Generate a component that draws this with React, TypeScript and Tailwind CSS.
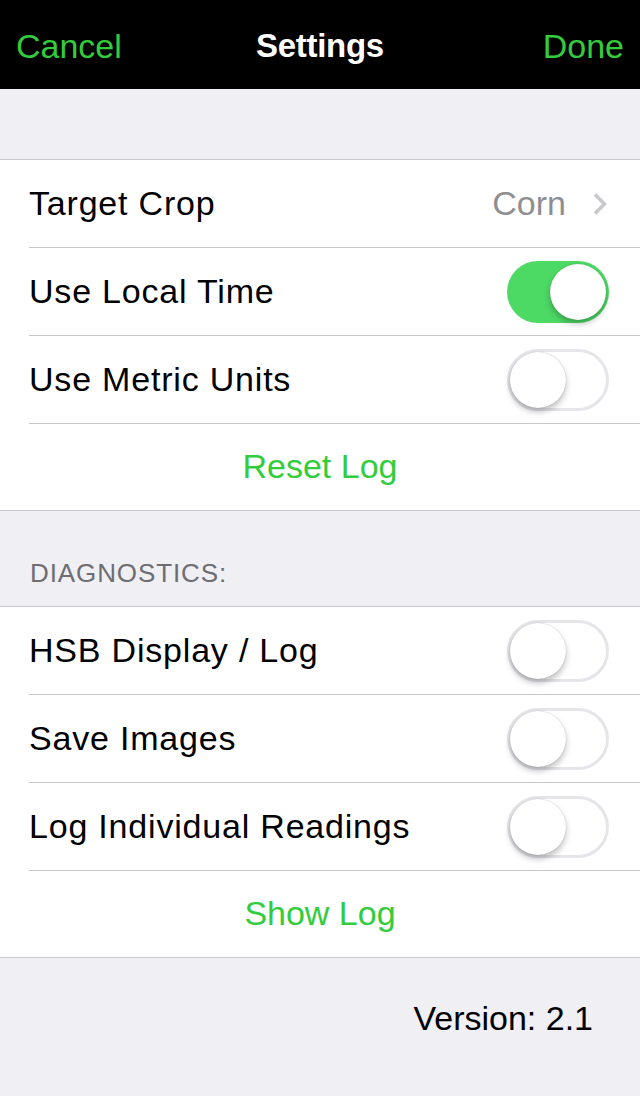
import { useState } from "react";

const font = { fontFamily: '"Liberation Sans", Arial, sans-serif' };

function Toggle({ on, onClick }: { on: boolean; onClick: () => void }) {
  return (
    <button
      onClick={onClick}
      className={
        "relative w-[102px] h-[62px] rounded-full shrink-0 transition-colors " +
        (on ? "bg-[#4cd964]" : "bg-white border-[3px] border-[#e5e5ea]")
      }
    >
      <span
        className={
          "absolute top-1/2 -translate-y-1/2 w-[56px] h-[56px] rounded-full bg-white shadow-[0_4px_6px_rgba(0,0,0,0.25),0_0_1px_rgba(0,0,0,0.3)] " +
          (on ? "right-[3px]" : "left-0")
        }
      />
    </button>
  );
}

function Row({
  label,
  children,
}: {
  label: string;
  children?: React.ReactNode;
}) {
  return (
    <div className="pl-[29px]">
      <div className="flex items-center justify-between pr-[31px] h-[88px] border-b border-[#c8c7cc]">
        <span className="text-[34px] text-black tracking-[0.8px]">{label}</span>
        {children}
      </div>
    </div>
  );
}

function ActionRow({ label }: { label: string }) {
  return (
    <button className="w-full h-[86px] flex items-center justify-center text-[34px] text-[#33cc3c] pb-[2px]">
      {label}
    </button>
  );
}

export default function App() {
  const [localTime, setLocalTime] = useState(true);
  const [metric, setMetric] = useState(false);
  const [hsb, setHsb] = useState(false);
  const [saveImages, setSaveImages] = useState(false);
  const [individual, setIndividual] = useState(false);

  return (
    <div className="w-[640px] h-[1096px] bg-[#efeff4] flex flex-col" style={font}>
      <div className="h-[89px] bg-black grid grid-cols-3 items-center px-4 pt-[3px]">
        <button className="text-[34px] text-[#33cc3c] text-left">Cancel</button>
        <div className="text-[33px] font-semibold text-white text-center tracking-[-0.3px]">
          Settings
        </div>
        <button className="text-[34px] text-[#33cc3c] text-right">Done</button>
      </div>

      <div className="h-[70px]" />

      <div className="bg-white border-y border-[#c8c7cc]">
        <Row label="Target Crop">
          <div className="flex items-center gap-[26px]">
            <span className="text-[34px] text-[#8e8e93]">Corn</span>
            <svg width="16" height="24" viewBox="0 0 16 24" className="mr-[1px]">
              <path
                d="M3 2.5 L12.5 12 L3 21.5"
                fill="none"
                stroke="#c7c7cc"
                strokeWidth="3.5"
              />
            </svg>
          </div>
        </Row>
        <Row label="Use Local Time">
          <Toggle on={localTime} onClick={() => setLocalTime(!localTime)} />
        </Row>
        <Row label="Use Metric Units">
          <Toggle on={metric} onClick={() => setMetric(!metric)} />
        </Row>
        <ActionRow label="Reset Log" />
      </div>

      <div className="h-[95px] flex items-end pl-[30px] pb-[13px]">
        <span className="text-[26px] text-[#6d6d72] uppercase tracking-[0.9px]">
          Diagnostics:
        </span>
      </div>

      <div className="bg-white border-y border-[#c8c7cc]">
        <Row label="HSB Display / Log">
          <Toggle on={hsb} onClick={() => setHsb(!hsb)} />
        </Row>
        <Row label="Save Images">
          <Toggle on={saveImages} onClick={() => setSaveImages(!saveImages)} />
        </Row>
        <Row label="Log Individual Readings">
          <Toggle on={individual} onClick={() => setIndividual(!individual)} />
        </Row>
        <ActionRow label="Show Log" />
      </div>

      <div className="flex justify-end pr-[47px] pt-[35px]">
        <span className="text-[34px] text-black">Version: 2.1</span>
      </div>
    </div>
  );
}
